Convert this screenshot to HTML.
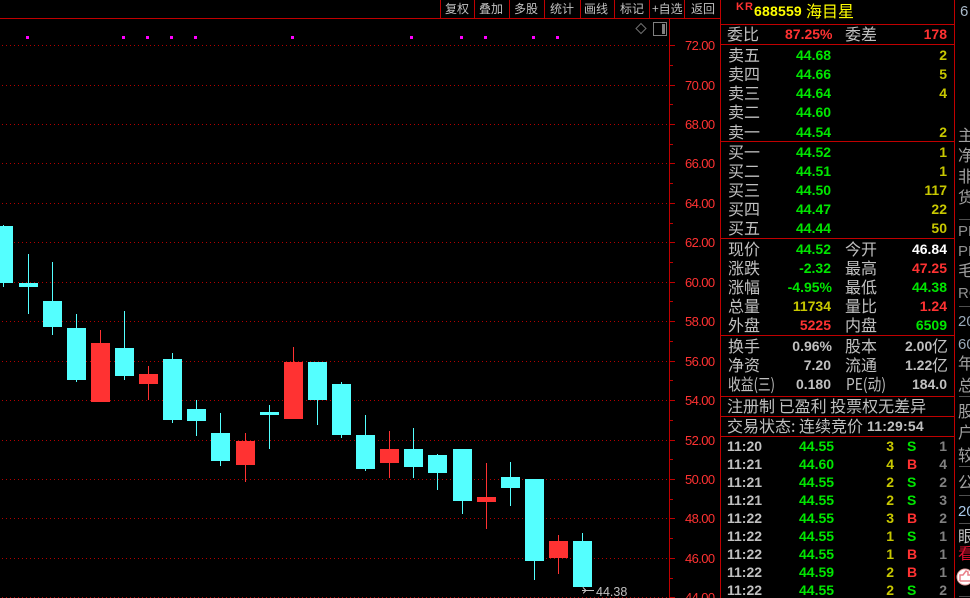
<!DOCTYPE html>
<html><head><meta charset="utf-8"><style>
html,body{margin:0;padding:0;background:#000;width:970px;height:598px;overflow:hidden}
svg{display:block}
text{font-family:"Liberation Sans","WenQuanYi Zen Hei",sans-serif;white-space:pre}
.c{font-family:"WenQuanYi Zen Hei","Noto Sans CJK SC",sans-serif;font-size:16px;fill:#c0c0c0}
.t{font-family:"WenQuanYi Zen Hei","Noto Sans CJK SC",sans-serif;font-size:16px;fill:#a0a0a0}
.s{font-family:"WenQuanYi Zen Hei","Noto Sans CJK SC",sans-serif;font-size:12px;fill:#c0c0c0}
.n{font-size:14px;font-weight:bold}
.e{text-anchor:end}
.a{font-size:13px;fill:#ff3232;letter-spacing:-.6px}
.g{fill:#00e600}.y{fill:#c8c800}.r{fill:#ff3232}.w{fill:#c0c0c0}.d{fill:#808080}.h{fill:#fff}
.q{fill:#54ffff}.p{fill:#ff3232}.m{fill:#ff00ff}
</style></head><body>
<svg width="970" height="598" viewBox="0 0 970 598" xmlns="http://www.w3.org/2000/svg">
<rect width="970" height="598" fill="#000"/>
<g shape-rendering="crispEdges">
<g stroke="#b40000" stroke-dasharray="1 3" fill="none">
<path d="M2 45.5H669M2 85.5H669M2 124.5H669M2 163.5H669M2 203.5H669M2 242.5H669M2 282.5H669M2 321.5H669M2 361.5H669M2 400.5H669M2 440.5H669M2 479.5H669M2 518.5H669M2 558.5H669M2 597.5H669"/>
</g>
<g fill="#c00000">
<rect x="0" y="18" width="720" height="1"/>
<rect x="669" y="18" width="1" height="580"/>
<rect x="720" y="0" width="1" height="598"/>
<rect x="954" y="0" width="1" height="598"/>
<rect x="720" y="24" width="234" height="1"/>
<rect x="720" y="44" width="234" height="1"/>
<rect x="720" y="141" width="234" height="1"/>
<rect x="720" y="238" width="234" height="1"/>
<rect x="720" y="335" width="234" height="1"/>
<rect x="720" y="396" width="234" height="1"/>
<rect x="720" y="416" width="234" height="1"/>
<rect x="720" y="436" width="234" height="1"/>
<rect x="440" y="0" width="1" height="18"/><rect x="474" y="0" width="1" height="18"/><rect x="509" y="0" width="1" height="18"/><rect x="544" y="0" width="1" height="18"/><rect x="580" y="0" width="1" height="18"/><rect x="614" y="0" width="1" height="18"/><rect x="649" y="0" width="1" height="18"/><rect x="684" y="0" width="1" height="18"/>
</g>
<path stroke="#c00000" fill="none" d="M670 45.5H675M670 65.5H673M670 85.5H675M670 104.5H673M670 124.5H675M670 144.5H673M670 163.5H675M670 183.5H673M670 203.5H675M670 223.5H673M670 242.5H675M670 262.5H673M670 282.5H675M670 301.5H673M670 321.5H675M670 341.5H673M670 361.5H675M670 380.5H673M670 400.5H675M670 420.5H673M670 440.5H675M670 459.5H673M670 479.5H675M670 499.5H673M670 518.5H675M670 538.5H673M670 558.5H675M670 578.5H673M670 597.5H675"/>
<g class="m">
<rect x="26" y="36" width="3" height="3"/><rect x="122" y="36" width="3" height="3"/><rect x="146" y="36" width="3" height="3"/><rect x="170" y="36" width="3" height="3"/><rect x="194" y="36" width="3" height="3"/><rect x="291" y="36" width="3" height="3"/><rect x="410" y="36" width="3" height="3"/><rect x="460" y="36" width="3" height="3"/><rect x="484" y="36" width="3" height="3"/><rect x="532" y="36" width="3" height="3"/><rect x="556" y="36" width="3" height="3"/>
</g>
<g class="q">
<rect x="3" y="225" width="1" height="62"/><rect x="0" y="226" width="13" height="57"/>
<rect x="28" y="254" width="1" height="60"/><rect x="19" y="283" width="19" height="4"/>
<rect x="52" y="262" width="1" height="73"/><rect x="43" y="301" width="19" height="26"/>
<rect x="76" y="314" width="1" height="68"/><rect x="67" y="328" width="19" height="52"/>
<rect x="124" y="311" width="1" height="69"/><rect x="115" y="348" width="19" height="28"/>
<rect x="172" y="353" width="1" height="70"/><rect x="163" y="359" width="19" height="61"/>
<rect x="196" y="400" width="1" height="36"/><rect x="187" y="409" width="19" height="12"/>
<rect x="220" y="413" width="1" height="53"/><rect x="211" y="433" width="19" height="28"/>
<rect x="269" y="405" width="1" height="44"/><rect x="260" y="412" width="19" height="3"/>
<rect x="317" y="362" width="1" height="63"/><rect x="308" y="362" width="19" height="38"/>
<rect x="341" y="382" width="1" height="56"/><rect x="332" y="384" width="19" height="51"/>
<rect x="365" y="415" width="1" height="56"/><rect x="356" y="435" width="19" height="34"/>
<rect x="413" y="428" width="1" height="50"/><rect x="404" y="449" width="19" height="18"/>
<rect x="437" y="454" width="1" height="36"/><rect x="428" y="455" width="19" height="18"/>
<rect x="462" y="449" width="1" height="65"/><rect x="453" y="449" width="19" height="52"/>
<rect x="510" y="462" width="1" height="44"/><rect x="501" y="477" width="19" height="11"/>
<rect x="534" y="479" width="1" height="101"/><rect x="525" y="479" width="19" height="82"/>
<rect x="582" y="533" width="1" height="54"/><rect x="573" y="541" width="19" height="46"/>
</g>
<g class="p">
<rect x="100" y="330" width="1" height="13"/><rect x="91" y="343" width="19" height="59"/>
<rect x="148" y="366" width="1" height="34"/><rect x="139" y="374" width="19" height="10"/>
<rect x="245" y="433" width="1" height="49"/><rect x="236" y="441" width="19" height="24"/>
<rect x="293" y="347" width="1" height="15"/><rect x="284" y="362" width="19" height="57"/>
<rect x="389" y="431" width="1" height="47"/><rect x="380" y="449" width="19" height="14"/>
<rect x="486" y="463" width="1" height="66"/><rect x="477" y="497" width="19" height="5"/>
<rect x="558" y="535" width="1" height="39"/><rect x="549" y="541" width="19" height="17"/>
</g>
<path stroke="#c0c0c0" fill="none" d="M582 590.5H594M583 587.5L586 590.5L583 593.5"/>
<rect x="653.5" y="22.5" width="13" height="13" fill="none" stroke="#808080"/>
<rect x="662" y="24" width="3" height="10" fill="#808080"/>
<path fill="none" stroke="#505050" d="M959 219.5H970M959 306.5H970M959 396.5H970M959 466.5H970M959 495.5H970M959 523.5H970M959 596.5H970"/>
</g>
<path d="M641 23.5L646 28.5L641 33.5L636 28.5Z" fill="none" stroke="#707070"/>

<!-- toolbar -->
<text class="s" x="445" y="13">复权</text><text class="s" x="479" y="13">叠加</text><text class="s" x="514" y="13">多股</text><text class="s" x="550" y="13">统计</text><text class="s" x="584" y="13">画线</text><text class="s" x="620" y="13">标记</text><text class="s" x="652" y="13">+自选</text><text class="s" x="691" y="13">返回</text>

<!-- axis -->
<text class="a" x="685" y="50">72.00</text><text class="a" x="685" y="90">70.00</text><text class="a" x="685" y="129">68.00</text><text class="a" x="685" y="168">66.00</text><text class="a" x="685" y="208">64.00</text><text class="a" x="685" y="247">62.00</text><text class="a" x="685" y="287">60.00</text><text class="a" x="685" y="326">58.00</text><text class="a" x="685" y="366">56.00</text><text class="a" x="685" y="405">54.00</text><text class="a" x="685" y="445">52.00</text><text class="a" x="685" y="484">50.00</text><text class="a" x="685" y="523">48.00</text><text class="a" x="685" y="563">46.00</text><text class="a" x="685" y="602">44.00</text>
<text x="596" y="596" font-size="12.5" fill="#c0c0c0">44.38</text>

<!-- header -->
<text x="736" y="10" font-size="11" font-weight="bold" fill="#ff3232" letter-spacing="1">KR</text>
<text class="n" x="754" y="16" fill="#ffff00" letter-spacing=".2">688559</text>
<text class="c" x="806" y="17" style="fill:#ffff00">海目星</text>

<text class="c" x="727" y="40">委比</text><text class="n r" x="785" y="39">87.25%</text><text class="c" x="845" y="40">委差</text><text class="n r e" x="947" y="39">178</text>

<text class="c" x="728" y="61">卖五</text><text class="n g" x="796" y="60">44.68</text><text class="n y e" x="947" y="60">2</text>
<text class="c" x="728" y="80">卖四</text><text class="n g" x="796" y="79">44.66</text><text class="n y e" x="947" y="79">5</text>
<text class="c" x="728" y="99">卖三</text><text class="n g" x="796" y="98">44.64</text><text class="n y e" x="947" y="98">4</text>
<text class="c" x="728" y="118">卖二</text><text class="n g" x="796" y="117">44.60</text>
<text class="c" x="728" y="138">卖一</text><text class="n g" x="796" y="137">44.54</text><text class="n y e" x="947" y="137">2</text>

<text class="c" x="728" y="158">买一</text><text class="n g" x="796" y="157">44.52</text><text class="n y e" x="947" y="157">1</text>
<text class="c" x="728" y="177">买二</text><text class="n g" x="796" y="176">44.51</text><text class="n y e" x="947" y="176">1</text>
<text class="c" x="728" y="196">买三</text><text class="n g" x="796" y="195">44.50</text><text class="n y e" x="947" y="195">117</text>
<text class="c" x="728" y="215">买四</text><text class="n g" x="796" y="214">44.47</text><text class="n y e" x="947" y="214">22</text>
<text class="c" x="728" y="234">买五</text><text class="n g" x="796" y="233">44.44</text><text class="n y e" x="947" y="233">50</text>

<text class="c" x="728" y="255">现价</text><text class="n g e" x="831" y="254">44.52</text><text class="c" x="845" y="255">今开</text><text class="n h e" x="947" y="254">46.84</text>
<text class="c" x="728" y="274">涨跌</text><text class="n g e" x="831" y="273">-2.32</text><text class="c" x="845" y="274">最高</text><text class="n r e" x="947" y="273">47.25</text>
<text class="c" x="728" y="293">涨幅</text><text class="n g e" x="832" y="292">-4.95%</text><text class="c" x="845" y="293">最低</text><text class="n g e" x="947" y="292">44.38</text>
<text class="c" x="728" y="312">总量</text><text class="n y e" x="831" y="311">11734</text><text class="c" x="845" y="312">量比</text><text class="n r e" x="947" y="311">1.24</text>
<text class="c" x="728" y="331">外盘</text><text class="n r e" x="831" y="330">5225</text><text class="c" x="845" y="331">内盘</text><text class="n g e" x="947" y="330">6509</text>

<text class="c" x="728" y="352">换手</text><text class="n w e" x="832" y="351">0.96%</text><text class="c" x="845" y="352">股本</text><text class="n w" x="905" y="351">2.00</text><text class="c" x="932" y="352">亿</text>
<text class="c" x="728" y="371">净资</text><text class="n w e" x="831" y="370">7.20</text><text class="c" x="845" y="371">流通</text><text class="n w" x="905" y="370">1.22</text><text class="c" x="932" y="371">亿</text>
<text class="c" x="728" y="390" textLength="47" lengthAdjust="spacingAndGlyphs">收益(三)</text><text class="n w e" x="831" y="389">0.180</text><text class="c" x="846" y="390" textLength="40" lengthAdjust="spacingAndGlyphs">PE(动)</text><text class="n w e" x="947" y="389">184.0</text>

<text class="c" x="727" y="412">注册制 已盈利 投票权无差异</text>
<text class="c" x="727" y="432">交易状态: 连续竞价</text><text class="n w" x="867" y="431" letter-spacing=".2">11:29:54</text>

<text class="n w" x="727" y="451">11:20</text><text class="n g" x="799" y="451">44.55</text><text class="n y e" x="894" y="451">3</text><text class="n g" x="907" y="451">S</text><text class="n d e" x="947" y="451">1</text>
<text class="n w" x="727" y="469">11:21</text><text class="n g" x="799" y="469">44.60</text><text class="n y e" x="894" y="469">4</text><text class="n r" x="907" y="469">B</text><text class="n d e" x="947" y="469">4</text>
<text class="n w" x="727" y="487">11:21</text><text class="n g" x="799" y="487">44.55</text><text class="n y e" x="894" y="487">2</text><text class="n g" x="907" y="487">S</text><text class="n d e" x="947" y="487">2</text>
<text class="n w" x="727" y="505">11:21</text><text class="n g" x="799" y="505">44.55</text><text class="n y e" x="894" y="505">2</text><text class="n g" x="907" y="505">S</text><text class="n d e" x="947" y="505">3</text>
<text class="n w" x="727" y="523">11:22</text><text class="n g" x="799" y="523">44.55</text><text class="n y e" x="894" y="523">3</text><text class="n r" x="907" y="523">B</text><text class="n d e" x="947" y="523">2</text>
<text class="n w" x="727" y="541">11:22</text><text class="n g" x="799" y="541">44.55</text><text class="n y e" x="894" y="541">1</text><text class="n g" x="907" y="541">S</text><text class="n d e" x="947" y="541">1</text>
<text class="n w" x="727" y="559">11:22</text><text class="n g" x="799" y="559">44.55</text><text class="n y e" x="894" y="559">1</text><text class="n r" x="907" y="559">B</text><text class="n d e" x="947" y="559">1</text>
<text class="n w" x="727" y="577">11:22</text><text class="n g" x="799" y="577">44.59</text><text class="n y e" x="894" y="577">2</text><text class="n r" x="907" y="577">B</text><text class="n d e" x="947" y="577">1</text>
<text class="n w" x="727" y="595">11:22</text><text class="n g" x="799" y="595">44.55</text><text class="n y e" x="894" y="595">2</text><text class="n g" x="907" y="595">S</text><text class="n d e" x="947" y="595">2</text>

<!-- right strip -->
<text x="960" y="16" font-size="15" fill="#a8b8c8">6</text>
<text class="t" x="958" y="141">主</text><text class="t" x="958" y="161">净</text><text class="t" x="958" y="182">非</text><text class="t" x="958" y="203">货</text>
<text x="958" y="236" font-size="15" fill="#909090">PE</text><text x="958" y="256" font-size="15" fill="#909090">PE</text>
<text class="t" x="958" y="276">毛</text><text x="958" y="298" font-size="15" fill="#909090">RO</text>
<text x="958" y="326" font-size="15" fill="#98a8b8">20</text><text x="958" y="349" font-size="15" fill="#98a8b8">60</text>
<text class="t" x="958" y="369">年</text><text class="t" x="958" y="391">总</text>
<text class="t" x="958" y="417">股</text><text class="t" x="958" y="438">户</text><text class="t" x="958" y="461">较</text>
<text class="t" x="958" y="488">公</text>
<text x="958" y="516" font-size="15" fill="#a8c8e8">20</text>
<text class="c" x="958" y="542">眼</text>
<text class="c" x="958" y="559" style="fill:#e01030">看</text>
<circle cx="965" cy="577" r="8" fill="#fff" stroke="#e8a0a0"/>
<path d="M960 581V575H963L966 571L968 572V575H970M960 581H970" fill="none" stroke="#e8808a" stroke-width="1.5"/>
</svg>
</body></html>
